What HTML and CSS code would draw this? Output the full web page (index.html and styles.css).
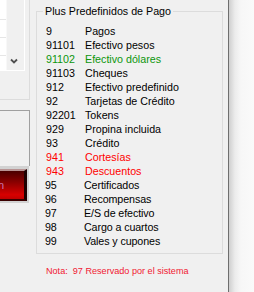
FILE: index.html
```html
<!DOCTYPE html>
<html lang="es">
<head>
  <meta charset="UTF-8" />
  <title>Plus Predefinidos de Pago</title>
  <link rel="stylesheet" href="styles.css">
</head>
<body>

  <div class="window">

    <!-- left controls (cut off) -->
    <aside class="side">
      <div class="panel">
        <div class="listbox">
          <div class="cells">
            <div class="cell first"></div>
            <div class="cell"></div>
            <div class="cell"></div>
          </div>
          <div class="scroll">
            <svg width="14" height="7" viewBox="0 0 14 7">
              <polyline points="4,1.5 7,4.5 10,1.5" fill="none" stroke="#505050" stroke-width="1.8" />
            </svg>
          </div>
        </div>
      </div>
      <div class="box"></div>
      <div class="btn-frame">
        <button class="red-btn">Abrir sesión</button>
      </div>
    </aside>

    <!-- group of predefined plus -->
    <main class="main">
      <fieldset class="group">
        <legend>Plus Predefinidos de Pago</legend>
        <div class="row"><span>9</span><span>Pagos</span></div>
        <div class="row"><span>91101</span><span>Efectivo pesos</span></div>
        <div class="row green"><span>91102</span><span>Efectivo dólares</span></div>
        <div class="row"><span>91103</span><span>Cheques</span></div>
        <div class="row"><span>912</span><span>Efectivo predefinido</span></div>
        <div class="row"><span>92</span><span>Tarjetas de Crédito</span></div>
        <div class="row"><span>92201</span><span>Tokens</span></div>
        <div class="row"><span>929</span><span>Propina incluida</span></div>
        <div class="row"><span>93</span><span>Crédito</span></div>
        <div class="row red"><span>941</span><span>Cortesías</span></div>
        <div class="row red"><span>943</span><span>Descuentos</span></div>
        <div class="row sys"><span>95</span><span>Certificados</span></div>
        <div class="row sys"><span>96</span><span>Recompensas</span></div>
        <div class="row sys"><span>97</span><span>E/S de efectivo</span></div>
        <div class="row sys"><span>98</span><span>Cargo a cuartos</span></div>
        <div class="row sys"><span>99</span><span>Vales y cupones</span></div>
      </fieldset>
      <p class="note">Nota:&nbsp; 97 Reservado por el sistema</p>
    </main>

    <div class="edge"></div>
  </div>

</body>
</html>
```

FILE: styles.css
```css
* {
  box-sizing: border-box;
}

body {
  margin: 0;
  width: 254px;
  height: 292px;
  overflow: hidden;
  background-color: #f0f0f0;
  font-family: 'Liberation Sans', Arial, sans-serif;
  font-size: 10.7px;
  color: #000;
}

.window {
  display: flex;
  height: 292px;
}

/* left side */
.side {
  width: 30px;
  flex: none;
}

.panel {
  width: 30px;
  height: 100px;
  border-right: 1px solid #dcdcdc;
  border-bottom: 1px solid #dcdcdc;
}

.listbox {
  display: flex;
  width: 25px;
  height: 71px;
  border-right: 1px solid #fff;
  border-bottom: 1px solid #fff;
}

.cells {
  width: 7px;
  background: #fff;
  border-right: 1px solid #f8f8f8;
}

.cell {
  height: 18px;
  border-bottom: 1px solid #e6e6e6;
}

.cell.first {
  height: 20px;
}

.scroll {
  flex: 1;
  display: flex;
  flex-direction: column;
  justify-content: flex-end;
  align-items: center;
  padding-bottom: 5px;
  padding-right: 3px;
}

.scroll svg {
  display: block;
}

.box {
  margin-top: 10px;
  width: 30px;
  height: 56px;
  border-top: 1px solid #a0a0a0;
  border-right: 1px solid #a0a0a0;
}

.btn-frame {
  width: 29px;
  height: 37px;
  padding: 3px 2px 2px 0;
  background: #d2d2d2;
  overflow: hidden;
  display: flex;
  justify-content: flex-end;
}

.red-btn {
  flex: none;
  width: 110px;
  height: 32px;
  padding: 0 20px 0 0;
  text-align: right;
  font-family: 'Liberation Sans', Arial, sans-serif;
  font-size: 11px;
  color: #c878b0;
  background: linear-gradient(#4a0000, #8a0000 40%, #d80000 85%, #c00000);
  border: none;
  border-top: 2px solid #b89494;
  border-right: 3px solid #1e0000;
  border-bottom: 2px solid #3a0000;
}

/* group box */
.main {
  width: 198px;
  flex: none;
}

.group {
  margin: 5px 0 0 6px;
  width: 187px;
  padding: 6px 0 5px 9px;
  border: 1px solid #dcdcdc;
}

.group legend {
  margin-left: -3px;
  padding: 0 2px;
  line-height: 13px;
  font-size: 10.7px;
}

.row {
  display: grid;
  grid-template-columns: 39px 1fr;
  height: 14px;
  line-height: 14px;
  white-space: nowrap;
}

.row.sys {
  margin-left: -1px;
  grid-template-columns: 39px 1fr;
  letter-spacing: -0.1px;
}

.row.green {
  color: #0c960c;
}

.row.red {
  color: #ff0000;
}

.note {
  margin: 11px 0 0 16px;
  font-size: 9.1px;
  line-height: 12px;
  color: #f01832;
  white-space: nowrap;
}

/* window edge on the right */
.edge {
  flex: 1;
  border-left: 1px solid #6e6e6e;
  background: linear-gradient(to right, #cfcfcf, #ececec 6px, #f7f7f7 12px, #fafafa);
}
```
